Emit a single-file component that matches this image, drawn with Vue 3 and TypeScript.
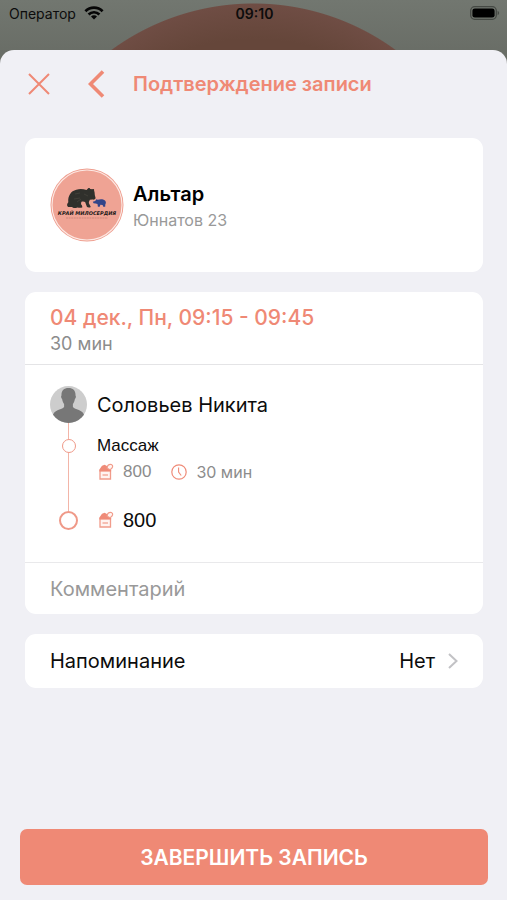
<script setup lang="ts">
import { ref } from 'vue'

interface Service {
  name: string
  price: number
  duration: string
}

const salon = { name: 'Альтар', address: 'Юннатов 23' }
const slot = { label: '04 дек., Пн, 09:15 - 09:45', duration: '30 мин' }
const master = 'Соловьев Никита'
const services: Service[] = [{ name: 'Массаж', price: 800, duration: '30 мин' }]
const total = services.reduce((sum, s) => sum + s.price, 0)
const reminder = ref('Нет')
const comment = ref('')
</script>

<template>
  <div class="screen">
    <div class="status">
      <div class="carrier">
        <span>Оператор</span>
        <svg width="20" height="14" viewBox="0 0 20 14" aria-hidden="true">
          <g fill="none" stroke="#060606" stroke-width="2.7">
            <path d="M1.4 5.2a12.2 12.2 0 0 1 17.2 0" />
            <path d="M4.6 8.5a7.6 7.6 0 0 1 10.8 0" />
          </g>
          <path d="M10 13.6l-3-3.1a4.2 4.2 0 0 1 6 0z" fill="#060606" />
        </svg>
      </div>
      <span class="clock">09:10</span>
      <div class="battery">
        <svg width="30" height="14" viewBox="0 0 30 14" aria-hidden="true">
          <rect x=".7" y=".7" width="25.6" height="12.6" rx="4" fill="none" stroke="#454944" stroke-width="1.3" />
          <rect x="2.4" y="2.4" width="22.2" height="9.2" rx="2.4" fill="#000" />
          <path d="M27.6 4.8c2 .8 2 3.6 0 4.4z" fill="#454944" />
        </svg>
      </div>
    </div>

    <main class="sheet">
      <header class="header">
        <button class="icon-button" type="button" aria-label="Закрыть">
          <svg width="22" height="22" viewBox="0 0 22 22"><path d="M1 1l20 20M21 1L1 21" fill="none" stroke="#ef8975" stroke-width="2" /></svg>
        </button>
        <button class="icon-button back" type="button" aria-label="Назад">
          <svg width="17" height="28" viewBox="0 0 17 28"><path d="M15 1.5L2.5 14 15 26.5" fill="none" stroke="#ef8975" stroke-width="3.6" /></svg>
        </button>
        <h1>Подтверждение записи</h1>
      </header>

      <section class="card salon">
        <svg class="logo" viewBox="0 0 74 74" aria-hidden="true">
          <circle cx="37" cy="37" r="36.5" fill="#ee9d8e" />
          <circle cx="37" cy="37" r="35" fill="#efa394" stroke="#fde9e4" stroke-width="1.1" />
          <path
            d="M18.2 39c-1.7-1-1.3-3.2.1-4.8-.6-6.2 2.5-11.3 8-12.5 4.2-1.1 7.4-.5 10.2.4l1.700-1.800c1-.5 1.800.1 2 .8l2.200.2c1-.7 2.100 0 1.700 1.500.8 1.600.5 3.200.8 4.800l.7 2.400c-.3 1.400-1.600 1.900-3 1.600l-2.700.2c-.7 1.200-1.200 2.500-1 3.500l1.800 3.400c-.5 1.100-2.700 1-3.700.4l-1.900-5c-1.200-.8-2.400-.7-3.600-.4-.7 1.400-.6 2.900.4 3.500l.5 2c-1 .8-3.100.6-5 .3-2.600 1-4.700.5-5.200-.5z"
            fill="#30302c"
          />
          <path d="M25 26l5-1M24 31l6-1M34 26l4 2M27 34l4-3" stroke="#4c4a42" stroke-width=".6" />
          <path
            d="M42.800 33.800l2.400-.9 1.200-1.600 1.300.4c2.700-.9 5.600-.7 7.300.8 1.200 1.100 1.100 2.900.3 4l-.1 2.200h-1.900l-.7-1.800-2.200-.1-.7 1.900h-1.800l-.4-2.800-1.900-.5-2-.2z"
            fill="#344489"
          />
          <text x="37" y="47" text-anchor="middle" class="logo-name">КРАЙ МИЛОСЕРДИЯ</text>
          <path d="M16 50h42" stroke="#b8776b" stroke-width=".6" stroke-dasharray="2 .6" />
        </svg>
        <div class="salon-text">
          <h2>{{ salon.name }}</h2>
          <p class="muted">{{ salon.address }}</p>
        </div>
      </section>

      <section class="card">
        <div class="slot">
          <h2>{{ slot.label }}</h2>
          <p>{{ slot.duration }}</p>
        </div>

        <div class="booking">
          <div class="step">
            <div class="rail first">
              <svg width="37" height="37" viewBox="0 0 37 37" aria-hidden="true">
                <clipPath id="avatar"><circle cx="18.5" cy="18.5" r="18.5" /></clipPath>
                <g clip-path="url(#avatar)">
                  <path d="M0 0h37v37H0z" fill="#cdcdcd" />
                  <path
                    d="M18.5 2c4.7 0 7.3 3 7 7.500.7.5.5 2.600-.6 3.600-.4 2.700-1.400 4-2 4.900v3c1.800 2.200 7.200 2.900 9.600 5.200 2 2 2.500 6 2.500 11.200H2c0-5.200.5-9.200 2.500-11.200 2.400-2.300 7.800-3 9.600-5.200v-3c-.6-.9-1.600-2.200-2-4.900-1.100-1-1.300-3.100-.6-3.600-.3-4.500 2.300-7.500 7-7.500z"
                    fill="#777"
                  />
                </g>
              </svg>
            </div>
            <h3 class="master">{{ master }}</h3>
          </div>

          <div v-for="service in services" :key="service.name" class="step">
            <div class="rail middle"><span class="dot"></span></div>
            <div class="service">
              <h3>{{ service.name }}</h3>
              <div class="facts">
                <svg class="purse" viewBox="0 0 16 18" aria-hidden="true">
                  <path d="M2 7.500h10.500V16H2z" fill="#fff4f1" stroke="#f19c8b" stroke-width="1.3" />
                  <path d="M1.400 8.600V6.400L4 2.800l2.700-1 2.500 1.500 3.900 3.400v1.900z" fill="#ef8b78" />
                  <path d="M9.200 5.200c-.3-2.800 2-4.500 4.200-3.700 2.100 1 1.600 3.900-1.400 5.200z" fill="#fff4f1" stroke="#f19c8b" stroke-width="1.2" />
                  <path d="M4.500 12h5.500" stroke="#f19c8b" stroke-width="1.2" />
                </svg>
                <span class="price">{{ service.price }}</span>
                <svg class="time" viewBox="0 0 16 16" aria-hidden="true">
                  <circle cx="8" cy="8" r="7.2" fill="none" stroke="#ef8b78" stroke-width="1.2" />
                  <path d="M7.600 3.500V8l2.600 3.500" fill="none" stroke="#ef8b78" stroke-width="1.1" />
                </svg>
                <span>{{ service.duration }}</span>
              </div>
            </div>
          </div>

          <div class="step">
            <div class="rail last"><span class="dot large"></span></div>
            <div class="total">
              <svg class="purse" viewBox="0 0 16 18" aria-hidden="true">
                <path d="M2 7.500h10.500V16H2z" fill="#fff4f1" stroke="#f19c8b" stroke-width="1.3" />
                <path d="M1.400 8.600V6.400L4 2.800l2.700-1 2.500 1.500 3.900 3.400v1.900z" fill="#ef8b78" />
                <path d="M9.200 5.200c-.3-2.800 2-4.500 4.200-3.700 2.100 1 1.600 3.900-1.400 5.200z" fill="#fff4f1" stroke="#f19c8b" stroke-width="1.2" />
                <path d="M4.500 12h5.500" stroke="#f19c8b" stroke-width="1.2" />
              </svg>
              <span>{{ total }}</span>
            </div>
          </div>
        </div>

        <input v-model="comment" class="comment" type="text" placeholder="Комментарий" aria-label="Комментарий" />
      </section>

      <button class="card reminder" type="button">
        <span>Напоминание</span>
        <span class="value">{{ reminder }}</span>
        <svg width="10" height="16" viewBox="0 0 10 16" aria-hidden="true"><path d="M1 1l7.500 7L1 15" fill="none" stroke="#c2c2c5" stroke-width="2" /></svg>
      </button>

      <button class="submit" type="button">ЗАВЕРШИТЬ ЗАПИСЬ</button>
    </main>
  </div>
</template>

<style>
body {
  background: #f0f0f5;
}
</style>

<style scoped>
* {
  box-sizing: border-box;
}
h1,
h2,
h3,
p {
  margin: 0;
  font-weight: 400;
}
button,
input {
  font: inherit;
  color: inherit;
  border: 0;
  padding: 0;
  background: none;
}
svg {
  display: block;
  flex: none;
}
.screen {
  display: flex;
  flex-direction: column;
  min-height: 100vh;
  font-family: Inter, 'Liberation Sans', sans-serif;
  color: #0c0c0c;
  background:
    radial-gradient(circle at 50% 244px, #65463a 0, #65463a 205px, #6f4d44 240px, transparent 241px),
    linear-gradient(#727770 0, #686c65 60px);
}
.status {
  display: grid;
  grid-template-columns: 1fr auto 1fr;
  align-items: center;
  height: 50px;
  padding: 0 7px 24px 9px;
  font-size: 14px;
}
.carrier {
  display: flex;
  align-items: center;
  gap: 8px;
}
.clock {
  font-weight: 600;
}
.battery {
  justify-self: end;
}
.sheet {
  flex: 1;
  display: flex;
  flex-direction: column;
  padding: 0 24px 15px 25px;
  border-radius: 14px 14px 0 0;
  background: #f0f0f5;
}
.header {
  display: flex;
  align-items: center;
  height: 68px;
  margin-bottom: 20px;
  padding-left: 3px;
  color: #ef8975;
}
.header h1 {
  font-size: 20px;
  font-weight: 600;
  margin-left: 28px;
}
.back {
  margin-left: 38px;
}
.card {
  border-radius: 11px;
  background: #fff;
  margin-bottom: 20px;
}
.salon {
  display: flex;
  align-items: center;
  gap: 9px;
  height: 134px;
  padding: 0 25px;
}
.salon-text {
  padding-top: 3px;
}
.salon h2 {
  font-size: 20px;
  line-height: 26px;
  font-weight: 600;
  color: #000;
}
.muted {
  font-size: 16px;
  line-height: 26px;
  color: #999;
}
.logo {
  width: 74px;
  height: 74px;
}
.logo-name {
  font-family: 'DejaVu Sans', sans-serif;
  font-size: 5px;
  font-weight: 700;
  font-style: italic;
  fill: #211a19;
}
.slot {
  height: 73px;
  padding: 13px 25px 0;
  border-bottom: 1px solid #e4e4e6;
}
.slot h2 {
  font-size: 21px;
  line-height: 26px;
  font-weight: 500;
  color: #ef8975;
}
.slot p {
  font-size: 18px;
  line-height: 26px;
  color: #8c8c8c;
}
.booking {
  padding: 21px 25px 24px;
}
.step {
  display: flex;
  gap: 10px;
}
.rail {
  display: flex;
  flex-direction: column;
  align-items: center;
  width: 37px;
}
.rail::before,
.rail::after {
  content: '';
  width: 1px;
  background: #f3b5a8;
}
.first::before,
.last::after {
  display: none;
}
.first::after,
.middle::after,
.last::before {
  flex: 1;
}
.middle::before {
  height: 7px;
}
.dot {
  width: 14px;
  height: 14px;
  border: 1px solid #ef9988;
  border-radius: 50%;
}
.large {
  width: 19px;
  height: 19px;
  border-width: 2px;
}
.master {
  font-size: 20px;
  line-height: 38px;
  padding-bottom: 8px;
}
.service h3,
.price,
.total {
  font-family: 'Liberation Sans', sans-serif;
}
.service h3 {
  font-size: 17px;
  line-height: 26px;
  padding-top: 1px;
}
.facts,
.total {
  display: flex;
  align-items: center;
}
.facts {
  height: 26px;
  font-size: 16px;
  color: #8c8c8c;
}
.price {
  font-size: 17px;
}
.purse {
  width: 16px;
  height: 18px;
  margin: 0 9px 0 1px;
}
.time {
  width: 16px;
  height: 16px;
  margin: 0 9px 0 20px;
}
.total {
  height: 36px;
  margin-top: 17px;
  font-size: 20px;
}
.last {
  padding-bottom: 8px;
}
.comment {
  display: block;
  width: 100%;
  height: 52px;
  padding: 0 25px;
  border-top: 1px solid #e9e9eb;
  font-size: 20px;
}
.comment::placeholder {
  color: #999;
  opacity: 1;
}
.reminder {
  display: flex;
  align-items: center;
  height: 54px;
  padding: 0 25px;
  font-size: 20px;
  text-align: left;
}
.value {
  margin: 0 13px 0 auto;
}
.submit {
  height: 56px;
  margin: auto -5px 0;
  border-radius: 7px;
  font-size: 21px;
  font-weight: 600;
  color: #fff;
  background: #ef8975;
}
</style>
